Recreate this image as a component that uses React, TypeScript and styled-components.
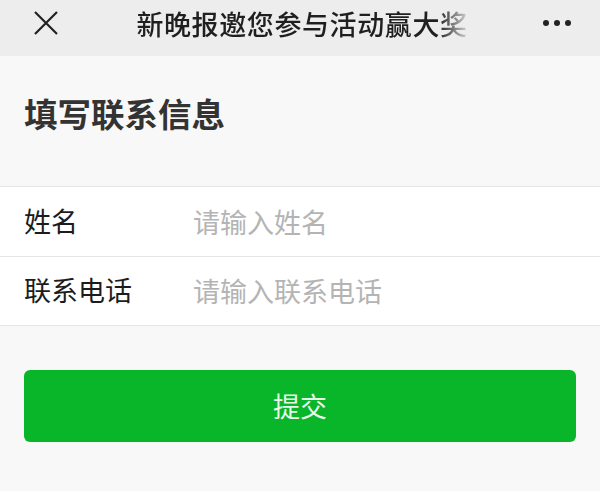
import React from 'react';
import styled, { createGlobalStyle } from 'styled-components';

const GlobalStyle = createGlobalStyle`
  html, body {
    margin: 0;
    padding: 0;
    background: #f8f8f8;
  }
  body {
    font-family: 'Noto Sans CJK SC', 'Noto Sans', sans-serif;
    color: #222;
  }
  * {
    box-sizing: border-box;
  }
`;

const Page = styled.div`
  width: 600px;
  min-height: 491px;
  background: #f8f8f8;
`;

const NavBar = styled.header`
  height: 56px;
  background: #ededed;
  display: flex;
  align-items: center;
  padding: 0 28px 0 34px;
`;

const NavTitle = styled.h1`
  flex: 1;
  margin: 0;
  text-align: center;
  font-size: 27px;
  line-height: 28px;
  font-weight: 500;
  color: #1f1f1f;
  padding-bottom: 8px;
  padding-left: 4px;
`;

const Title = styled.span`
  display: inline-block;
  letter-spacing: 0.6px;
  -webkit-mask-image: linear-gradient(to right, #000 91%, rgba(0, 0, 0, 0.12) 100%);
  mask-image: linear-gradient(to right, #000 91%, rgba(0, 0, 0, 0.12) 100%);
`;

const IconButton = styled.span`
  display: flex;
  align-items: center;
  justify-content: center;
  margin-bottom: 11px;
`;

const Heading = styled.h2`
  margin: 40px 0 0;
  padding: 0 24px;
  font-size: 33.5px;
  line-height: 34px;
  font-weight: 700;
  color: #333;
`;

const Form = styled.form`
  margin-top: 56px;
  background: #fff;
  border-top: 1px solid #e5e5e5;
  border-bottom: 1px solid #e5e5e5;
`;

const Row = styled.label<{ $last?: boolean }>`
  display: flex;
  align-items: center;
  height: ${p => (p.$last ? '68px' : '70px')};
  padding: 0 24px;
  border-bottom: ${p => (p.$last ? 'none' : '1px solid #e5e5e5')};
`;

const Label = styled.span`
  width: 169px;
  flex-shrink: 0;
  font-size: 27px;
  line-height: 30px;
  color: #1c1c1c;
  padding-bottom: 2px;
`;

const Field = styled.input`
  flex: 1;
  border: none;
  outline: none;
  background: transparent;
  padding: 0;
  font-family: 'Noto Sans CJK SC', 'Noto Sans', sans-serif;
  font-size: 27px;
  line-height: 30px;
  color: #222;

  &::placeholder {
    color: #b4b4b4;
  }
`;

const Submit = styled.button`
  display: block;
  margin: 44px 24px 0;
  width: calc(100% - 48px);
  height: 72px;
  border: none;
  border-radius: 6px;
  background: #09b529;
  color: #e9f7ea;
  font-family: 'Noto Sans CJK SC', 'Noto Sans', sans-serif;
  font-size: 27px;
  padding-bottom: 2px;
`;

const CloseIcon = () => (
  <svg width="24" height="24" viewBox="0 0 24 24">
    <path d="M1 1 L23 23 M23 1 L1 23" stroke="#222" strokeWidth="2.2" fill="none" />
  </svg>
);

const MoreIcon = () => (
  <svg width="30" height="8" viewBox="0 0 30 8">
    <circle cx="4" cy="4" r="3" fill="#222" />
    <circle cx="15" cy="4" r="3" fill="#222" />
    <circle cx="26" cy="4" r="3" fill="#222" />
  </svg>
);

export default function App() {
  return (
    <>
      <GlobalStyle />
      <Page>
        <NavBar>
          <IconButton>
            <CloseIcon />
          </IconButton>
          <NavTitle>
            <Title>新晚报邀您参与活动赢大奖</Title>
          </NavTitle>
          <IconButton>
            <MoreIcon />
          </IconButton>
        </NavBar>
        <Heading>填写联系信息</Heading>
        <Form onSubmit={e => e.preventDefault()}>
          <Row>
            <Label>姓名</Label>
            <Field placeholder="请输入姓名" />
          </Row>
          <Row $last>
            <Label>联系电话</Label>
            <Field placeholder="请输入联系电话" />
          </Row>
        </Form>
        <Submit type="submit">提交</Submit>
      </Page>
    </>
  );
}
